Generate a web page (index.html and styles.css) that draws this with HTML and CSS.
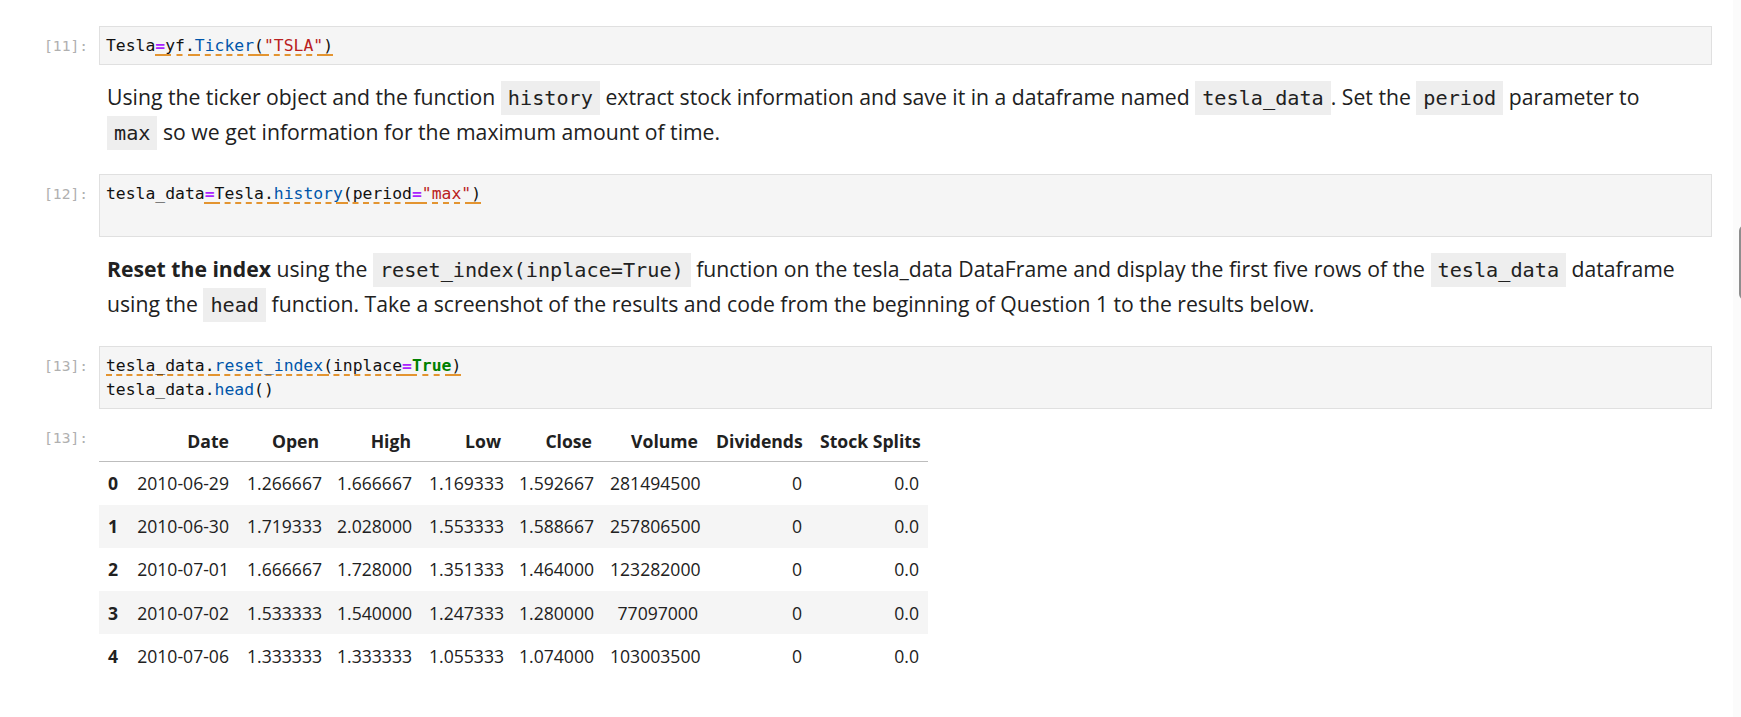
FILE: index.html
```html
<!DOCTYPE html>
<html>
<head>
<meta charset="utf-8">
<link rel="stylesheet" href="styles.css">
</head>
<body>
<div class="notebook">

  <div class="cell code-cell">
    <div class="prompt">[11]:</div>
    <div class="input"><pre class="code">Tesla<span class="lint"><span class="o">=</span>yf.<span class="p">Ticker</span>(<span class="s">"TSLA"</span>)</span></pre></div>
  </div>

  <div class="cell md-cell">
    <div class="prompt"></div>
    <div class="md"><p>Using the ticker object and the function <code>history</code> extract stock information and save it in a dataframe named <code>tesla_data</code>. Set the <code>period</code> parameter to<br><code>max</code> so we get information for the maximum amount of time.</p></div>
  </div>

  <div class="cell code-cell">
    <div class="prompt">[12]:</div>
    <div class="input"><pre class="code">tesla_data<span class="lint"><span class="o">=</span>Tesla.<span class="p">history</span>(period<span class="o">=</span><span class="s">"max"</span>)</span>
 </pre></div>
  </div>

  <div class="cell md-cell">
    <div class="prompt"></div>
    <div class="md"><p><strong>Reset the index</strong> using the <code>reset_index(inplace=True)</code> function on the tesla_data DataFrame and display the first five rows of the <code>tesla_data</code> dataframe<br>using the <code>head</code> function. Take a screenshot of the results and code from the beginning of Question 1 to the results below.</p></div>
  </div>

  <div class="cell code-cell">
    <div class="prompt">[13]:</div>
    <div class="input"><pre class="code"><span class="lint">tesla_data.<span class="p">reset_index</span>(inplace<span class="o">=</span><span class="k">True</span>)</span>
tesla_data.<span class="p">head</span>()</pre></div>
  </div>

  <div class="cell output-cell">
    <div class="prompt out-prompt">[13]:</div>
    <div class="output">
      <table class="df">
        <colgroup>
          <col class="c-idx"><col class="c-date"><col class="c-open"><col class="c-high"><col class="c-low"><col class="c-close"><col class="c-vol"><col class="c-div"><col class="c-split">
        </colgroup>
        <thead>
          <tr><th></th><th>Date</th><th>Open</th><th>High</th><th>Low</th><th>Close</th><th>Volume</th><th>Dividends</th><th>Stock Splits</th></tr>
        </thead>
        <tbody>
          <tr><th>0</th><td>2010-06-29</td><td>1.266667</td><td>1.666667</td><td>1.169333</td><td>1.592667</td><td>281494500</td><td>0</td><td>0.0</td></tr>
          <tr><th>1</th><td>2010-06-30</td><td>1.719333</td><td>2.028000</td><td>1.553333</td><td>1.588667</td><td>257806500</td><td>0</td><td>0.0</td></tr>
          <tr><th>2</th><td>2010-07-01</td><td>1.666667</td><td>1.728000</td><td>1.351333</td><td>1.464000</td><td>123282000</td><td>0</td><td>0.0</td></tr>
          <tr><th>3</th><td>2010-07-02</td><td>1.533333</td><td>1.540000</td><td>1.247333</td><td>1.280000</td><td>77097000</td><td>0</td><td>0.0</td></tr>
          <tr><th>4</th><td>2010-07-06</td><td>1.333333</td><td>1.333333</td><td>1.055333</td><td>1.074000</td><td>103003500</td><td>0</td><td>0.0</td></tr>
        </tbody>
      </table>
    </div>
  </div>

</div>
<div class="scrollbar"><div class="thumb"></div></div>
</body>
</html>
```

FILE: styles.css
```css
html, body {
  margin: 0;
  padding: 0;
  background: #ffffff;
}

body {
  font-family: "Open Sans", "Noto Sans", sans-serif;
  color: #212121;
  overflow: hidden;
}

.notebook {
  padding-top: 26px;
}

.cell {
  display: flex;
  align-items: flex-start;
}

.prompt {
  flex: none;
  width: 99px;
  box-sizing: border-box;
  padding-right: 11px;
  padding-top: 8px;
  text-align: right;
  font-family: "DejaVu Sans Mono", "Liberation Mono", monospace;
  font-size: 14.6px;
  line-height: 24px;
  color: #b0b0b0;
}

.input {
  flex: 1;
  margin-right: 29px;
  background: #f5f5f5;
  border: 1px solid #e0e0e0;
  padding: 7px 6px 6px;
}

.code {
  margin: 0;
  font-family: "DejaVu Sans Mono", "Liberation Mono", monospace;
  font-size: 16.4px;
  line-height: 24px;
  color: #111;
  white-space: pre;
}

.code .o { color: #aa22ff; font-weight: bold; }
.code .p { color: #0055aa; }
.code .s { color: #ba2121; }
.code .k { color: #008000; font-weight: bold; }

.lint {
  text-decoration: underline dashed #e39430;
  text-decoration-thickness: 2px;
  text-underline-offset: 3px;
}

.md-cell .prompt {
  padding-top: 0;
}

.md {
  flex: 1;
  margin-right: 29px;
  padding-left: 8px;
}

.md p {
  margin: 14px 0 25px 0;
  font-size: 21.2px;
  line-height: 35px;
  white-space: nowrap;
  color: #212121;
}

.md strong {
  font-weight: 700;
}

.md code {
  font-family: "DejaVu Sans Mono", "Liberation Mono", monospace;
  font-size: 20.2px;
  line-height: 1;
  background: #eeeeee;
  padding: 5px 7px;
  color: #212121;
}

.out-prompt {
  padding-top: 17px;
}

.output {
  flex: 1;
  padding-top: 11px;
}

.df {
  border-collapse: collapse;
  table-layout: fixed;
  width: 829px;
  font-size: 17.6px;
  color: #212121;
}

.c-idx { width: 28px; }
.c-date { width: 111px; }
.c-open { width: 90px; }
.c-high { width: 92px; }
.c-low { width: 90px; }
.c-close { width: 91px; }
.c-vol { width: 106px; }
.c-div { width: 104px; }
.c-split { width: 117px; }

.df th,
.df td {
  text-align: right;
  padding: 0 9px;
  white-space: nowrap;
  vertical-align: middle;
}

.df thead th {
  font-weight: 700;
  height: 41px;
  border-bottom: 1px solid #bdbdbd;
}

.df tbody th {
  font-weight: 700;
}

.df tbody tr {
  height: 43.2px;
}

.df tbody tr:nth-child(even) {
  background: #f5f5f5;
}

.scrollbar {
  position: fixed;
  top: 0;
  right: 0;
  bottom: 0;
  width: 8px;
  background: #fbfbfb;
  overflow: hidden;
}

.thumb {
  position: absolute;
  left: 6px;
  top: 225px;
  width: 12px;
  height: 71px;
  border: 2px solid #8e8e8e;
  border-radius: 6px;
}
```
